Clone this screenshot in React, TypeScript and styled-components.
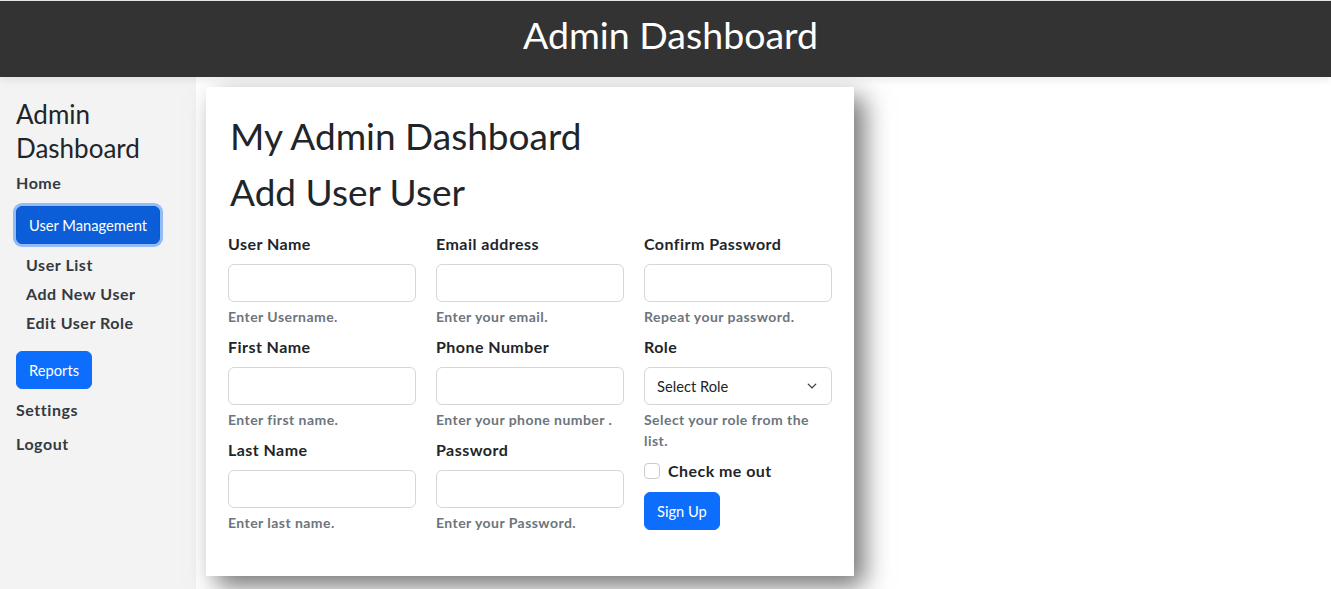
import React from 'react'
import styled, { createGlobalStyle } from 'styled-components'

const GlobalStyle = createGlobalStyle`
  * {
    box-sizing: border-box;
  }
  body {
    margin: 0;
    font-family: Lato, 'Open Sans', sans-serif;
    color: #212529;
    background: #fff;
  }
`

const sideLinks = [
  { label: 'User List' },
  { label: 'Add New User' },
  { label: 'Edit User Role' },
]

const columns = [
  [
    { label: 'User Name', help: 'Enter Username.', type: 'text' },
    { label: 'First Name', help: 'Enter first name.', type: 'text' },
    { label: 'Last Name', help: 'Enter last name.', type: 'text' },
  ],
  [
    { label: 'Email address', help: 'Enter your email.', type: 'email' },
    { label: 'Phone Number', help: 'Enter your phone number .', type: 'tel' },
    { label: 'Password', help: 'Enter your Password.', type: 'password' },
  ],
]

export default function App() {
  return (
    <>
      <GlobalStyle />
      <Header>
        <HeaderTitle>Admin Dashboard</HeaderTitle>
      </Header>
      <Body>
        <Sidebar>
          <SideTitle>Admin Dashboard</SideTitle>
          <NavLink $gap={11}>Home</NavLink>
          <NavButton $active>User Management</NavButton>
          <SubList>
            {sideLinks.map((link) => (
              <SubLink key={link.label}>{link.label}</SubLink>
            ))}
          </SubList>
          <NavButton>Reports</NavButton>
          <NavLink $gap={10}>Settings</NavLink>
          <NavLink $gap={0}>Logout</NavLink>
        </Sidebar>
        <Main>
          <Card>
            <Title>My Admin Dashboard</Title>
            <Title $last>Add User User</Title>
            <Form onSubmit={(e) => e.preventDefault()}>
              {columns.map((fields, i) => (
                <Column key={i}>
                  {fields.map((field) => (
                    <Field key={field.label}>
                      <Label>{field.label}</Label>
                      <Input type={field.type} />
                      <Help>{field.help}</Help>
                    </Field>
                  ))}
                </Column>
              ))}
              <Column>
                <Field>
                  <Label>Confirm Password</Label>
                  <Input type="password" />
                  <Help>Repeat your password.</Help>
                </Field>
                <Field>
                  <Label>Role</Label>
                  <SelectWrap>
                    <Select defaultValue="">
                      <option value="">Select Role</option>
                      <option value="admin">Admin</option>
                      <option value="user">User</option>
                    </Select>
                    <Chevron viewBox="0 0 16 16">
                      <path
                        d="M3 5.5l5 5 5-5"
                        fill="none"
                        stroke="#343a40"
                        strokeWidth="1.8"
                        strokeLinecap="round"
                        strokeLinejoin="round"
                      />
                    </Chevron>
                  </SelectWrap>
                  <Help>Select your role from the list.</Help>
                </Field>
                <Check>
                  <CheckBox type="checkbox" />
                  Check me out
                </Check>
                <SubmitButton type="submit">Sign Up</SubmitButton>
              </Column>
            </Form>
          </Card>
        </Main>
      </Body>
    </>
  )
}

const Header = styled.header`
  height: 77px;
  border-top: 1px solid #e6e6e6;
  background: #333;
  display: flex;
  align-items: center;
  justify-content: center;
  box-shadow: 0 3px 8px rgba(0, 0, 0, 0.08);
  position: relative;
  z-index: 1;
`
const HeaderTitle = styled.h1`
  margin: 0 0 9px 10px;
  color: #fff;
  font-size: 37.5px;
  font-weight: 400;
  line-height: 1.2;
`
const Body = styled.div`
  display: flex;
  align-items: flex-start;
`
const Sidebar = styled.nav`
  width: 196px;
  min-height: calc(100vh - 77px);
  background: #f3f3f3;
  padding: 20px 16px;
  display: flex;
  flex-direction: column;
  align-items: flex-start;
`
const SideTitle = styled.h3`
  margin: 0 0 6px;
  font-size: 26px;
  font-weight: 400;
  line-height: 34px;
  color: #212529;
`
const NavLink = styled.a<{ $gap: number }>`
  display: block;
  margin-bottom: ${(p) => p.$gap}px;
  font-size: 16px;
  font-weight: 700;
  line-height: 24px;
  letter-spacing: 0.55px;
  color: #343a40;
  cursor: pointer;
`
const NavButton = styled.button<{ $active?: boolean }>`
  height: 38px;
  padding: 6px 12px;
  border: 1px solid ${(p) => (p.$active ? '#0a58ca' : '#0d6efd')};
  border-radius: 6px;
  background: ${(p) => (p.$active ? '#0b5ed7' : '#0d6efd')};
  box-shadow: ${(p) => (p.$active ? '0 0 0 3px rgba(49, 132, 253, 0.5)' : 'none')};
  color: #fff;
  font-family: inherit;
  font-size: 14.7px;
  line-height: 24px;
  margin-bottom: 9px;
  cursor: pointer;
`
const SubList = styled.div`
  display: flex;
  flex-direction: column;
  gap: 5px;
  padding-left: 10px;
  margin-bottom: 16px;
`
const SubLink = styled.a`
  font-size: 16px;
  font-weight: 700;
  line-height: 24px;
  letter-spacing: 0.55px;
  color: #343a40;
  cursor: pointer;
`
const Main = styled.main`
  flex: 1;
  padding: 10px;
`
const Card = styled.section`
  width: 648px;
  padding: 25px 22px 35px;
  background: #fff;
  box-shadow: 10px 10px 24px rgba(0, 0, 0, 0.55);
`
const Title = styled.h1<{ $last?: boolean }>`
  margin: 0 0 ${(p) => (p.$last ? 16 : 8)}px 2px;
  font-size: 37px;
  font-weight: 400;
  line-height: 48px;
`
const Form = styled.form`
  display: grid;
  grid-template-columns: repeat(3, 188px);
  column-gap: 20px;
`
const Column = styled.div`
  display: flex;
  flex-direction: column;
  align-items: flex-start;
`
const Field = styled.div`
  width: 100%;
  margin-bottom: 8px;
`
const Label = styled.label`
  display: block;
  margin-bottom: 8px;
  font-size: 16px;
  font-weight: 700;
  line-height: 24px;
  letter-spacing: 0.45px;
`
const Input = styled.input`
  display: block;
  width: 100%;
  height: 38px;
  padding: 6px 12px;
  border: 1px solid #d3d6da;
  border-radius: 6px;
  font-family: inherit;
  font-size: 16px;
`
const Help = styled.div`
  margin-top: 4px;
  font-size: 14px;
  font-weight: 700;
  line-height: 21px;
  letter-spacing: 0.45px;
  color: #6c757d;
`
const SelectWrap = styled.div`
  position: relative;
`
const Select = styled.select`
  display: block;
  width: 100%;
  height: 38px;
  padding: 6px 36px 6px 12px;
  border: 1px solid #d3d6da;
  border-radius: 6px;
  background: #fff;
  appearance: none;
  font-family: inherit;
  font-size: 14.7px;
  color: #212529;
`
const Chevron = styled.svg`
  position: absolute;
  right: 14px;
  top: 13px;
  width: 12px;
  height: 12px;
  pointer-events: none;
`
const Check = styled.label`
  display: flex;
  align-items: center;
  gap: 8px;
  margin-bottom: 9px;
  font-size: 16px;
  font-weight: 700;
  line-height: 24px;
  letter-spacing: 0.45px;
`
const CheckBox = styled.input`
  appearance: none;
  width: 16px;
  height: 16px;
  margin: 0;
  border: 1px solid #c9cdd2;
  border-radius: 4px;
  background: #fff;
`
const SubmitButton = styled.button`
  height: 38px;
  padding: 6px 12px;
  border: 1px solid #0d6efd;
  border-radius: 6px;
  background: #0d6efd;
  color: #fff;
  font-family: inherit;
  font-size: 14.7px;
  line-height: 24px;
  cursor: pointer;
`
